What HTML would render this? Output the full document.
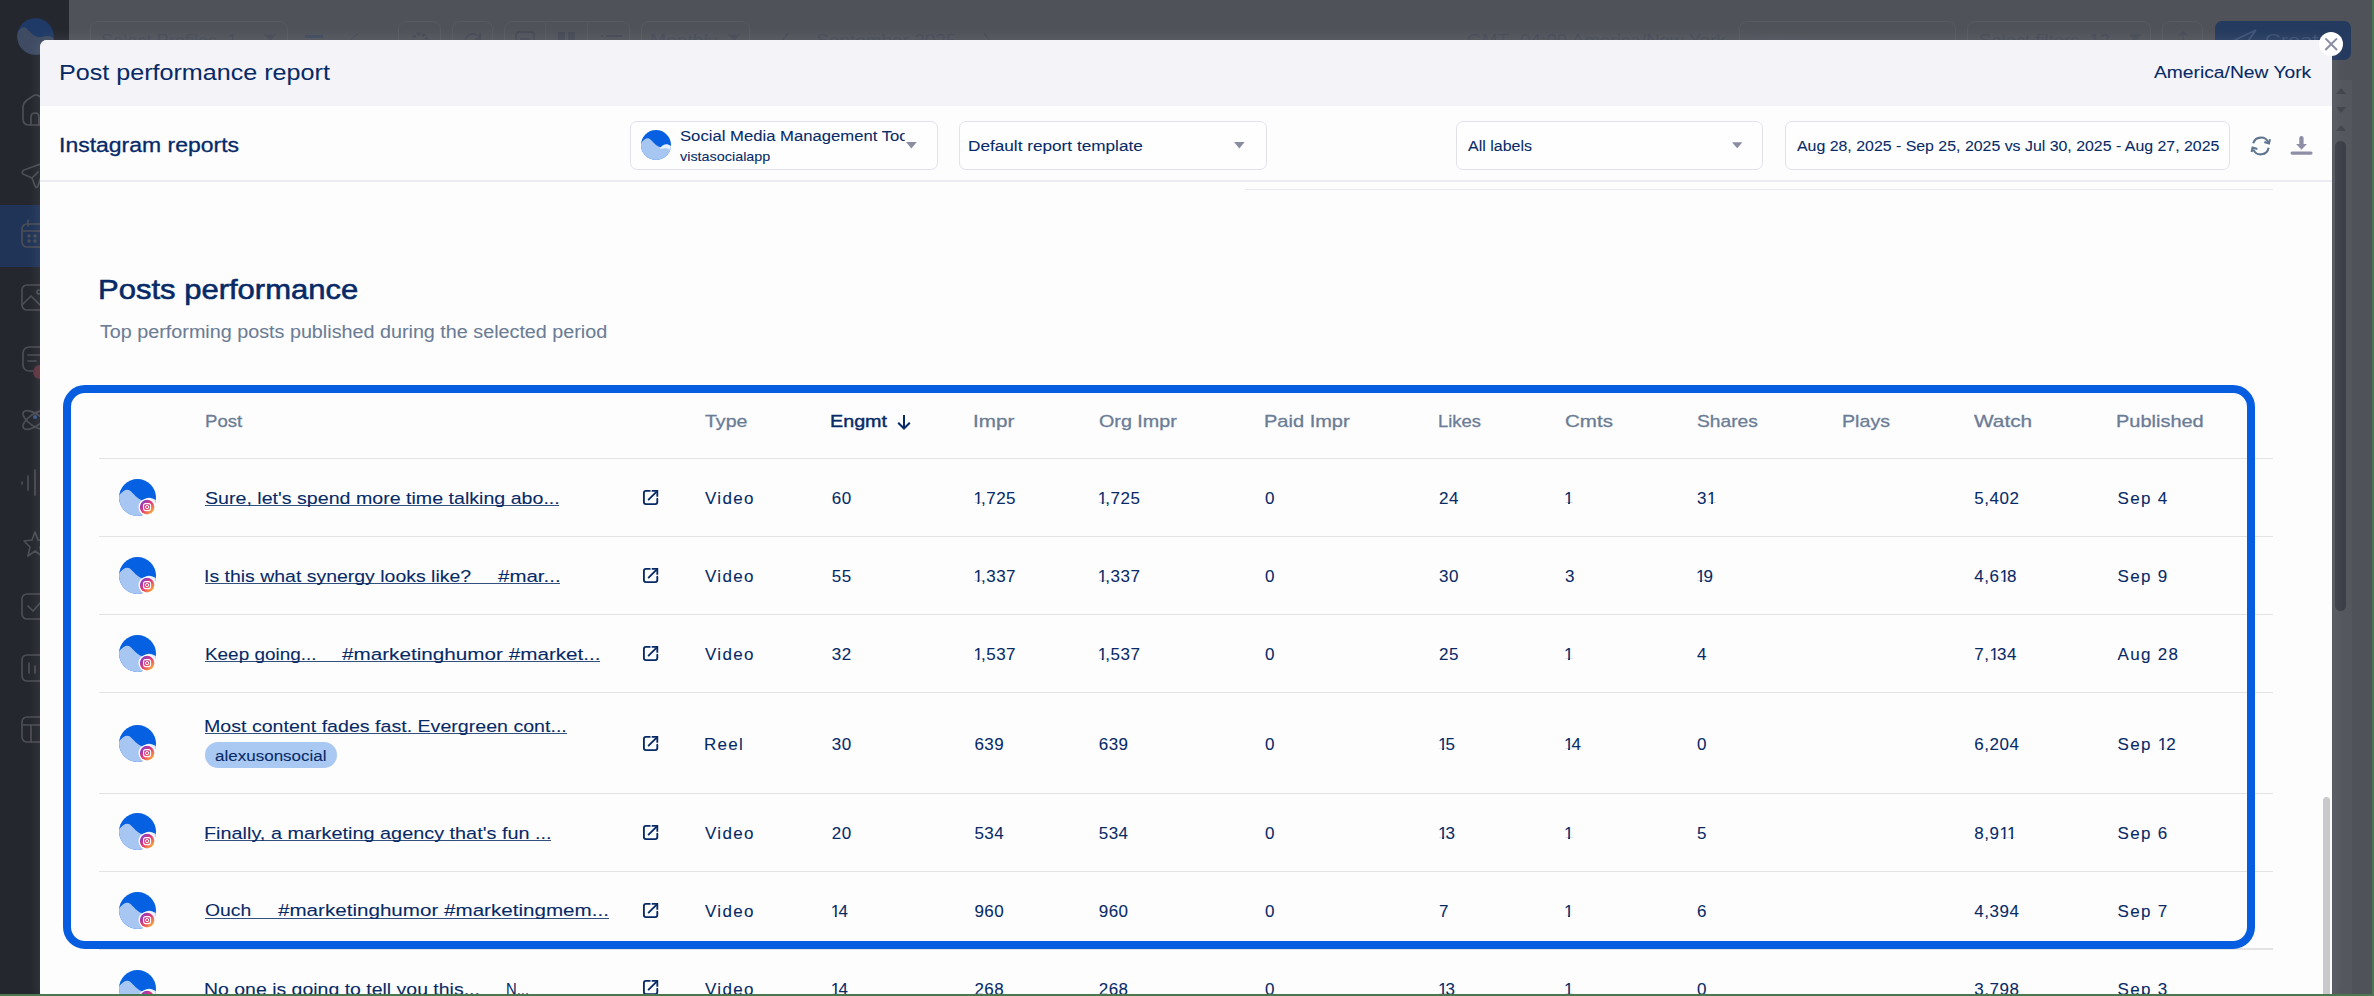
<!DOCTYPE html>
<html><head><meta charset="utf-8"><title>Post performance report</title>
<style>
*{margin:0;padding:0;box-sizing:border-box}
html,body{width:2374px;height:996px;overflow:hidden;background:#50525a;font-family:"Liberation Sans",sans-serif}
.abs{position:absolute}
.t{position:absolute;white-space:nowrap;line-height:1}
.one{display:inline-block;margin-right:-2.4px;clip-path:polygon(0 0,100% 0,100% 0.74em,0.35em 0.74em,0.35em 100%,0.24em 100%,0.24em 0.74em,0 0.74em)}
.ul{position:absolute;height:1.25px;background:#34507f}
.box{border:1.5px solid #e1e2ec;border-radius:7px;background:#fefeff}
.tb{border:1px solid #585a62;border-radius:8px}
</style></head><body>
<div class="abs" style="left:0;top:0;width:2374px;height:996px;background:#50525a"></div>
<div class="abs" style="left:0;top:0;width:69px;height:996px;background:#25272f"></div>
<div class="abs" style="left:0;top:205px;width:69px;height:61.5px;background:#203458"></div>
<svg class="abs" style="left:17px;top:17.5px" width="37" height="37" viewBox="0 0 37 37"><defs><clipPath id="lg"><circle cx="18.5" cy="18.5" r="18.3"/></clipPath></defs><g clip-path="url(#lg)"><rect width="37" height="37" fill="#1f3a66"/><path d="M0 15C4 9 7 8 10 11C15 16 19 20 25 19C30 17 33 18 37 20L37 37L0 37Z" fill="#3e4b62"/></g></svg>
<svg class="abs" style="left:0;top:0" width="69" height="996" viewBox="0 0 69 996" fill="none" stroke="#4c4e56" stroke-width="1.7" stroke-linecap="round" stroke-linejoin="round">
<path d="M23 110Q22 104 27 100L33 96Q36 94 39 96L45 100Q49 103 48 110V119Q48 125 42 125H29Q23 125 23 119Z"/><path d="M31 125V117Q31 113 35 113Q39 113 39 117V125"/>
<path d="M23 174Q21 172 24 170L46 162L38 186Q37 189 35 186L32 178Z"/><path d="M32 178L38 172"/>
<rect x="22" y="224" width="26" height="23" rx="5"/><path d="M28 220V226M42 220V226M22 231H48"/><circle cx="29" cy="236" r="0.9" fill="#4c4e56"/><circle cx="35" cy="236" r="0.9" fill="#4c4e56"/><circle cx="29" cy="241" r="0.9" fill="#4c4e56"/><circle cx="35" cy="241" r="0.9" fill="#4c4e56"/>
<rect x="22" y="285" width="26" height="25" rx="5"/><path d="M22 305L31 296L40 305"/><circle cx="39" cy="292" r="2"/>
<rect x="23" y="347" width="25" height="24" rx="6"/><path d="M28 355H40M28 361H36"/>
<ellipse cx="35" cy="420" rx="14" ry="6" transform="rotate(35 35 420)"/><ellipse cx="35" cy="420" rx="14" ry="6" transform="rotate(-35 35 420)"/>
<path d="M22 482V484M28 476V490M35 470V495"/>
<path d="M35 532L38 540L46 541L40 547L42 556L35 551L28 556L30 547L24 541L32 540Z"/>
<rect x="22" y="594" width="26" height="25" rx="5"/><path d="M28 606L33 611L41 602"/>
<rect x="22" y="655" width="26" height="26" rx="5"/><path d="M29 663V673M35 666V673"/>
<rect x="22" y="717" width="26" height="25" rx="5"/><path d="M22 725H48M31 725V742"/>
</svg>
<div class="abs" style="left:33px;top:365px;width:14px;height:14px;border-radius:50%;background:#5e3440"></div>
<svg class="abs" style="left:31px;top:413px" width="8" height="8"><circle cx="4" cy="4" r="2" fill="#3f5a8a"/></svg>
<div class="abs tb" style="left:89.6px;top:20.7px;width:198px;height:40px"></div>
<svg class="abs" style="left:264px;top:34px" width="12" height="8" viewBox="0 0 10 6"><path d="M0 0H10L5 6Z" fill="#474b56"/></svg>
<div class="abs" style="left:304.5px;top:35px;width:18.5px;height:2.5px;background:#3f4a5e"></div>
<svg class="abs" style="left:348px;top:30px" width="12" height="12"><path d="M2 11L10 3" stroke="#474b56" stroke-width="1.5"/></svg>
<div class="abs tb" style="left:398.4px;top:20.7px;width:43px;height:40px"></div>
<div class="abs tb" style="left:452.2px;top:20.7px;width:41px;height:40px"></div>
<div class="abs tb" style="left:504px;top:20.7px;width:126px;height:40px"></div>
<div class="abs" style="left:545px;top:22px;width:1px;height:20px;background:#565860"></div>
<div class="abs" style="left:587px;top:22px;width:1px;height:20px;background:#565860"></div>
<svg class="abs" style="left:408px;top:28px" width="26" height="14" fill="none" stroke="#444955" stroke-width="2"><circle cx="12" cy="13" r="7" stroke-dasharray="3 2" stroke-width="3"/></svg>
<svg class="abs" style="left:462px;top:30px" width="22" height="12" fill="none" stroke="#444955" stroke-width="1.8"><path d="M3 12A8 8 0 0 1 18 8"/><path d="M18 3V9H13"/></svg>
<svg class="abs" style="left:514px;top:30px" width="22" height="12" fill="none" stroke="#444955" stroke-width="1.8"><rect x="2" y="2" width="18" height="14" rx="3"/><path d="M6 9H16"/></svg>
<div class="abs" style="left:558px;top:32px;width:7px;height:8px;background:#444955"></div><div class="abs" style="left:568px;top:32px;width:7px;height:8px;background:#444955"></div>
<div class="abs" style="left:601px;top:34.5px;width:2px;height:2px;background:#444955"></div><div class="abs" style="left:606px;top:34.5px;width:16px;height:2px;background:#444955"></div>
<div class="abs tb" style="left:641px;top:20.7px;width:109px;height:40px"></div>
<svg class="abs" style="left:728px;top:34px" width="12" height="8" viewBox="0 0 10 6"><path d="M0 0H10L5 6Z" fill="#474b56"/></svg>
<svg class="abs" style="left:780px;top:32px" width="10" height="10"><path d="M8 1L2 9" stroke="#474b56" stroke-width="1.6"/></svg>
<svg class="abs" style="left:982px;top:32px" width="10" height="10"><path d="M2 1L8 9" stroke="#474b56" stroke-width="1.6"/></svg>
<div class="abs tb" style="left:1739px;top:20.7px;width:217px;height:40px"></div>
<div class="abs tb" style="left:1967px;top:20.7px;width:184px;height:40px"></div>
<svg class="abs" style="left:2129px;top:34px" width="12" height="8" viewBox="0 0 10 6"><path d="M0 0H10L5 6Z" fill="#474b56"/></svg>
<div class="abs tb" style="left:2161.8px;top:20.7px;width:41px;height:40px"></div>
<svg class="abs" style="left:2176px;top:30px" width="14" height="12" fill="none" stroke="#474b56" stroke-width="1.6"><path d="M7 12V2M3 6L7 2L11 6"/></svg>
<div class="abs" style="left:2215px;top:21px;width:136px;height:39px;border-radius:7px;background:#243a5e"></div>
<svg class="abs" style="left:2230px;top:27px" width="30" height="15" fill="none" stroke="#3d5378" stroke-width="1.8"><path d="M3 14L26 3L18 14"/></svg>
<div class="abs" style="left:2333px;top:80px;width:19px;height:916px;background:#55575e"></div>
<div class="abs" style="left:2335px;top:141px;width:11px;height:470px;border-radius:6px;background:#3d3f48"></div>
<svg class="abs" style="left:2335px;top:83px" width="12" height="50" viewBox="0 0 12 50"><path d="M1 11L6 5L11 11Z" fill="#44464e"/><path d="M1 24L6 30L11 24Z" fill="#44464e"/><path d="M1 48L6 42L11 48Z" fill="#44464e"/></svg>
<div class="abs" style="left:2372px;top:0;width:2px;height:996px;background:#4a7650"></div>
<div class="t" style="left:101.00px;top:32.11px;font-size:17px;font-weight:400;color:#454a57;-webkit-text-stroke:0px #454a57;transform:scaleX(1.0692);transform-origin:0 0;">Select Profiles &nbsp;1</div><div class="t" style="left:649.86px;top:32.11px;font-size:17px;font-weight:400;color:#454a57;-webkit-text-stroke:0px #454a57;transform:scaleX(1.1351);transform-origin:0 0;">Monthly</div><div class="t" style="left:816.00px;top:32.11px;font-size:17px;font-weight:400;color:#454a57;-webkit-text-stroke:0px #454a57;transform:scaleX(1.1178);transform-origin:0 0;">September 2025</div><div class="t" style="left:1467.00px;top:32.11px;font-size:17px;font-weight:400;color:#454a57;-webkit-text-stroke:0px #454a57;transform:scaleX(1.1101);transform-origin:0 0;">GMT -04:00 America/New York</div><div class="t" style="left:1750.00px;top:32.11px;font-size:17px;font-weight:400;color:#4d515c;-webkit-text-stroke:0px #4d515c;transform:scaleX(0.9474);transform-origin:0 0;">Search</div><div class="t" style="left:1979.00px;top:32.11px;font-size:17px;font-weight:400;color:#454a57;-webkit-text-stroke:0px #454a57;transform:scaleX(1.0839);transform-origin:0 0;">Select filters &nbsp;12</div><div class="t" style="left:2265.00px;top:32.11px;font-size:17px;font-weight:400;color:#3a5076;-webkit-text-stroke:0px #3a5076;transform:scaleX(1.2853);transform-origin:0 0;">Create</div>
<div class="abs" style="left:39.5px;top:39.5px;width:2292.5px;height:960px;border-radius:7px;background:#fdfdfe;overflow:hidden;box-shadow:0 0 14px 1px rgba(255,255,255,0.10)">
  <div class="abs" style="left:0;top:0;width:100%;height:66.3px;background:#f3f3f8"></div>
  <div class="abs" style="left:0;top:140.5px;width:100%;height:1.5px;background:#ebecf2"></div>
  <div class="abs" style="left:1205.5px;top:149px;width:1028px;height:1.5px;background:#e8e9f0"></div>
  <div class="abs" style="left:2283px;top:757px;width:7.5px;height:210px;border-radius:4px;background:#c9c9cb"></div>
</div>
<div class="abs" style="left:99px;top:457.85px;width:2174px;height:1.5px;background:#e3e3e6"></div><div class="abs" style="left:99px;top:535.55px;width:2174px;height:1.5px;background:#e3e3e6"></div><div class="abs" style="left:99px;top:613.75px;width:2174px;height:1.5px;background:#e3e3e6"></div><div class="abs" style="left:99px;top:691.55px;width:2174px;height:1.5px;background:#e3e3e6"></div><div class="abs" style="left:99px;top:792.55px;width:2174px;height:1.5px;background:#e3e3e6"></div><div class="abs" style="left:99px;top:870.65px;width:2174px;height:1.5px;background:#e3e3e6"></div><div class="abs" style="left:99px;top:948.25px;width:2174px;height:1.5px;background:#e3e3e6"></div>
<div class="abs" style="left:63px;top:384.6px;width:2192px;height:564px;border:8px solid #075de0;border-radius:22px"></div>
<div class="abs box" style="left:630.4px;top:121.3px;width:307.3px;height:48.5px"></div><div class="abs box" style="left:958.6px;top:121.3px;width:308.1px;height:48.5px"></div><div class="abs box" style="left:1456.3px;top:121.3px;width:307.2px;height:48.5px"></div><div class="abs box" style="left:1784.7px;top:121.3px;width:445.6px;height:48.5px"></div>
<svg class="abs" style="left:906.0px;top:142.0px" width="10.8" height="6.5" viewBox="0 0 10 6"><path d="M0 0H10L5 6Z" fill="#8a8da1"/></svg><svg class="abs" style="left:1234.3px;top:142.1px" width="10.7" height="6.5" viewBox="0 0 10 6"><path d="M0 0H10L5 6Z" fill="#8a8da1"/></svg><svg class="abs" style="left:1732.2px;top:142.1px" width="10.4" height="6.5" viewBox="0 0 10 6"><path d="M0 0H10L5 6Z" fill="#8a8da1"/></svg>
<svg class="abs" style="left:640.8px;top:130px" width="30" height="30" viewBox="0 0 30 30"><defs><clipPath id="pc"><circle cx="15" cy="15" r="15"/></clipPath></defs><g clip-path="url(#pc)"><rect width="30" height="30" fill="#0660e1"/><path d="M0 13C4 8 7 7 10 10C14 14 17 18 22 17C25 15 27 15 30 17L30 30L0 30Z" fill="#a7c7f2"/><path d="M19 18C22 14 26 13 30 16L30 20C26 18 23 18 19 19Z" fill="#e6effb"/></g></svg>
<svg class="abs" style="left:2245px;top:130px" width="75" height="32" viewBox="2245 130 75 32"><g fill="none" stroke="#5f7590" stroke-width="2.1" stroke-linecap="butt" stroke-linejoin="miter"><path d="M2253.2 143.3A8 8 0 0 1 2268.3 142.6"/><path d="M2264.3 142.0L2268.9 143.4L2270.0 139.2"/><path d="M2268.6 147.8A8 8 0 0 1 2253.4 149.6"/><path d="M2257.4 149.0L2252.6 147.6L2251.6 152.0"/></g>
<path d="M2301.45 138.2V145" stroke="#8e8fa6" stroke-width="4.3" stroke-linecap="round"/><path d="M2296.1 144.1H2306.9L2301.5 149.8Z" fill="#8e8fa6"/><rect x="2290.5" y="151.4" width="22.1" height="3.3" rx="1.65" fill="#8e8fa6"/></svg>
<svg class="abs" style="left:895.5px;top:414px" width="16" height="16" viewBox="0 0 16 16"><path d="M8 1V14.5M2.2 8.7L8 14.5L13.8 8.7" fill="none" stroke="#072a66" stroke-width="2"/></svg>
<div class="abs" style="left:204.9px;top:742.1px;width:132px;height:25.7px;border-radius:13px;background:#a9c8f2"></div>
<svg class="abs" style="left:117.5px;top:478.0px" width="39" height="39" viewBox="-1 -1 39 39">
<defs><clipPath id="cp137_497"><circle cx="18.5" cy="18.5" r="18.5"/></clipPath>
<linearGradient id="ig137_497" x1="0.15" y1="0.15" x2="0.85" y2="0.85"><stop offset="0" stop-color="#8e3bc2"/><stop offset="0.5" stop-color="#e23a72"/><stop offset="1" stop-color="#fba83a"/></linearGradient></defs>
<g clip-path="url(#cp137_497)">
<rect x="0" y="0" width="37" height="37" fill="#0561e1"/>
<path d="M0 16.3 C4.4 11.1 8.1 9.2 11.8 12.2 C16.7 17.0 20.4 22.2 26.6 21.5 C30.3 18.5 33.3 19.2 37 21.5 L37 37 L0 37 Z" fill="#a7c7f2"/>
<path d="M22.9 22.9 C26.6 18.5 31.1 17.0 37 21.5 L37 25.9 C31.4 22.9 27.8 22.9 22.9 24.4 Z" fill="#e6effb"/>
</g>
<circle cx="28.1" cy="28.1" r="8.6" fill="#ffffff"/>
<circle cx="28.1" cy="28.1" r="7.3" fill="url(#ig137_497)"/>
<rect x="24.6" y="24.6" width="7" height="7" rx="2" fill="none" stroke="#fff" stroke-width="1.1"/>
<circle cx="28.1" cy="28.1" r="1.6" fill="none" stroke="#fff" stroke-width="1"/></svg><svg class="abs" style="left:117.5px;top:556.0px" width="39" height="39" viewBox="-1 -1 39 39">
<defs><clipPath id="cp137_575"><circle cx="18.5" cy="18.5" r="18.5"/></clipPath>
<linearGradient id="ig137_575" x1="0.15" y1="0.15" x2="0.85" y2="0.85"><stop offset="0" stop-color="#8e3bc2"/><stop offset="0.5" stop-color="#e23a72"/><stop offset="1" stop-color="#fba83a"/></linearGradient></defs>
<g clip-path="url(#cp137_575)">
<rect x="0" y="0" width="37" height="37" fill="#0561e1"/>
<path d="M0 16.3 C4.4 11.1 8.1 9.2 11.8 12.2 C16.7 17.0 20.4 22.2 26.6 21.5 C30.3 18.5 33.3 19.2 37 21.5 L37 37 L0 37 Z" fill="#a7c7f2"/>
<path d="M22.9 22.9 C26.6 18.5 31.1 17.0 37 21.5 L37 25.9 C31.4 22.9 27.8 22.9 22.9 24.4 Z" fill="#e6effb"/>
</g>
<circle cx="28.1" cy="28.1" r="8.6" fill="#ffffff"/>
<circle cx="28.1" cy="28.1" r="7.3" fill="url(#ig137_575)"/>
<rect x="24.6" y="24.6" width="7" height="7" rx="2" fill="none" stroke="#fff" stroke-width="1.1"/>
<circle cx="28.1" cy="28.1" r="1.6" fill="none" stroke="#fff" stroke-width="1"/></svg><svg class="abs" style="left:117.5px;top:634.0px" width="39" height="39" viewBox="-1 -1 39 39">
<defs><clipPath id="cp137_653"><circle cx="18.5" cy="18.5" r="18.5"/></clipPath>
<linearGradient id="ig137_653" x1="0.15" y1="0.15" x2="0.85" y2="0.85"><stop offset="0" stop-color="#8e3bc2"/><stop offset="0.5" stop-color="#e23a72"/><stop offset="1" stop-color="#fba83a"/></linearGradient></defs>
<g clip-path="url(#cp137_653)">
<rect x="0" y="0" width="37" height="37" fill="#0561e1"/>
<path d="M0 16.3 C4.4 11.1 8.1 9.2 11.8 12.2 C16.7 17.0 20.4 22.2 26.6 21.5 C30.3 18.5 33.3 19.2 37 21.5 L37 37 L0 37 Z" fill="#a7c7f2"/>
<path d="M22.9 22.9 C26.6 18.5 31.1 17.0 37 21.5 L37 25.9 C31.4 22.9 27.8 22.9 22.9 24.4 Z" fill="#e6effb"/>
</g>
<circle cx="28.1" cy="28.1" r="8.6" fill="#ffffff"/>
<circle cx="28.1" cy="28.1" r="7.3" fill="url(#ig137_653)"/>
<rect x="24.6" y="24.6" width="7" height="7" rx="2" fill="none" stroke="#fff" stroke-width="1.1"/>
<circle cx="28.1" cy="28.1" r="1.6" fill="none" stroke="#fff" stroke-width="1"/></svg><svg class="abs" style="left:117.5px;top:723.7px" width="39" height="39" viewBox="-1 -1 39 39">
<defs><clipPath id="cp137_743"><circle cx="18.5" cy="18.5" r="18.5"/></clipPath>
<linearGradient id="ig137_743" x1="0.15" y1="0.15" x2="0.85" y2="0.85"><stop offset="0" stop-color="#8e3bc2"/><stop offset="0.5" stop-color="#e23a72"/><stop offset="1" stop-color="#fba83a"/></linearGradient></defs>
<g clip-path="url(#cp137_743)">
<rect x="0" y="0" width="37" height="37" fill="#0561e1"/>
<path d="M0 16.3 C4.4 11.1 8.1 9.2 11.8 12.2 C16.7 17.0 20.4 22.2 26.6 21.5 C30.3 18.5 33.3 19.2 37 21.5 L37 37 L0 37 Z" fill="#a7c7f2"/>
<path d="M22.9 22.9 C26.6 18.5 31.1 17.0 37 21.5 L37 25.9 C31.4 22.9 27.8 22.9 22.9 24.4 Z" fill="#e6effb"/>
</g>
<circle cx="28.1" cy="28.1" r="8.6" fill="#ffffff"/>
<circle cx="28.1" cy="28.1" r="7.3" fill="url(#ig137_743)"/>
<rect x="24.6" y="24.6" width="7" height="7" rx="2" fill="none" stroke="#fff" stroke-width="1.1"/>
<circle cx="28.1" cy="28.1" r="1.6" fill="none" stroke="#fff" stroke-width="1"/></svg><svg class="abs" style="left:117.5px;top:812.2px" width="39" height="39" viewBox="-1 -1 39 39">
<defs><clipPath id="cp137_831"><circle cx="18.5" cy="18.5" r="18.5"/></clipPath>
<linearGradient id="ig137_831" x1="0.15" y1="0.15" x2="0.85" y2="0.85"><stop offset="0" stop-color="#8e3bc2"/><stop offset="0.5" stop-color="#e23a72"/><stop offset="1" stop-color="#fba83a"/></linearGradient></defs>
<g clip-path="url(#cp137_831)">
<rect x="0" y="0" width="37" height="37" fill="#0561e1"/>
<path d="M0 16.3 C4.4 11.1 8.1 9.2 11.8 12.2 C16.7 17.0 20.4 22.2 26.6 21.5 C30.3 18.5 33.3 19.2 37 21.5 L37 37 L0 37 Z" fill="#a7c7f2"/>
<path d="M22.9 22.9 C26.6 18.5 31.1 17.0 37 21.5 L37 25.9 C31.4 22.9 27.8 22.9 22.9 24.4 Z" fill="#e6effb"/>
</g>
<circle cx="28.1" cy="28.1" r="8.6" fill="#ffffff"/>
<circle cx="28.1" cy="28.1" r="7.3" fill="url(#ig137_831)"/>
<rect x="24.6" y="24.6" width="7" height="7" rx="2" fill="none" stroke="#fff" stroke-width="1.1"/>
<circle cx="28.1" cy="28.1" r="1.6" fill="none" stroke="#fff" stroke-width="1"/></svg><svg class="abs" style="left:117.5px;top:890.5px" width="39" height="39" viewBox="-1 -1 39 39">
<defs><clipPath id="cp137_910"><circle cx="18.5" cy="18.5" r="18.5"/></clipPath>
<linearGradient id="ig137_910" x1="0.15" y1="0.15" x2="0.85" y2="0.85"><stop offset="0" stop-color="#8e3bc2"/><stop offset="0.5" stop-color="#e23a72"/><stop offset="1" stop-color="#fba83a"/></linearGradient></defs>
<g clip-path="url(#cp137_910)">
<rect x="0" y="0" width="37" height="37" fill="#0561e1"/>
<path d="M0 16.3 C4.4 11.1 8.1 9.2 11.8 12.2 C16.7 17.0 20.4 22.2 26.6 21.5 C30.3 18.5 33.3 19.2 37 21.5 L37 37 L0 37 Z" fill="#a7c7f2"/>
<path d="M22.9 22.9 C26.6 18.5 31.1 17.0 37 21.5 L37 25.9 C31.4 22.9 27.8 22.9 22.9 24.4 Z" fill="#e6effb"/>
</g>
<circle cx="28.1" cy="28.1" r="8.6" fill="#ffffff"/>
<circle cx="28.1" cy="28.1" r="7.3" fill="url(#ig137_910)"/>
<rect x="24.6" y="24.6" width="7" height="7" rx="2" fill="none" stroke="#fff" stroke-width="1.1"/>
<circle cx="28.1" cy="28.1" r="1.6" fill="none" stroke="#fff" stroke-width="1"/></svg><svg class="abs" style="left:117.5px;top:968.5px" width="39" height="39" viewBox="-1 -1 39 39">
<defs><clipPath id="cp137_988"><circle cx="18.5" cy="18.5" r="18.5"/></clipPath>
<linearGradient id="ig137_988" x1="0.15" y1="0.15" x2="0.85" y2="0.85"><stop offset="0" stop-color="#8e3bc2"/><stop offset="0.5" stop-color="#e23a72"/><stop offset="1" stop-color="#fba83a"/></linearGradient></defs>
<g clip-path="url(#cp137_988)">
<rect x="0" y="0" width="37" height="37" fill="#0561e1"/>
<path d="M0 16.3 C4.4 11.1 8.1 9.2 11.8 12.2 C16.7 17.0 20.4 22.2 26.6 21.5 C30.3 18.5 33.3 19.2 37 21.5 L37 37 L0 37 Z" fill="#a7c7f2"/>
<path d="M22.9 22.9 C26.6 18.5 31.1 17.0 37 21.5 L37 25.9 C31.4 22.9 27.8 22.9 22.9 24.4 Z" fill="#e6effb"/>
</g>
<circle cx="28.1" cy="28.1" r="8.6" fill="#ffffff"/>
<circle cx="28.1" cy="28.1" r="7.3" fill="url(#ig137_988)"/>
<rect x="24.6" y="24.6" width="7" height="7" rx="2" fill="none" stroke="#fff" stroke-width="1.1"/>
<circle cx="28.1" cy="28.1" r="1.6" fill="none" stroke="#fff" stroke-width="1"/></svg>
<svg class="abs" style="left:642px;top:488.9px" width="17" height="17" viewBox="-1 -1 17 17"><g fill="none" stroke="#072a66" stroke-width="1.85" stroke-linecap="round"><path d="M6.8 0.9H2.9Q0.9 0.9 0.9 2.9V12.1Q0.9 14.1 2.9 14.1H12.3Q14.3 14.1 14.3 12.1V8.7"/><path d="M8.7 0.9H14.3V6.8" stroke-linecap="butt"/><path d="M5.6 9.6L13.9 1.3"/></g></svg><svg class="abs" style="left:642px;top:566.9px" width="17" height="17" viewBox="-1 -1 17 17"><g fill="none" stroke="#072a66" stroke-width="1.85" stroke-linecap="round"><path d="M6.8 0.9H2.9Q0.9 0.9 0.9 2.9V12.1Q0.9 14.1 2.9 14.1H12.3Q14.3 14.1 14.3 12.1V8.7"/><path d="M8.7 0.9H14.3V6.8" stroke-linecap="butt"/><path d="M5.6 9.6L13.9 1.3"/></g></svg><svg class="abs" style="left:642px;top:644.8px" width="17" height="17" viewBox="-1 -1 17 17"><g fill="none" stroke="#072a66" stroke-width="1.85" stroke-linecap="round"><path d="M6.8 0.9H2.9Q0.9 0.9 0.9 2.9V12.1Q0.9 14.1 2.9 14.1H12.3Q14.3 14.1 14.3 12.1V8.7"/><path d="M8.7 0.9H14.3V6.8" stroke-linecap="butt"/><path d="M5.6 9.6L13.9 1.3"/></g></svg><svg class="abs" style="left:642px;top:734.7px" width="17" height="17" viewBox="-1 -1 17 17"><g fill="none" stroke="#072a66" stroke-width="1.85" stroke-linecap="round"><path d="M6.8 0.9H2.9Q0.9 0.9 0.9 2.9V12.1Q0.9 14.1 2.9 14.1H12.3Q14.3 14.1 14.3 12.1V8.7"/><path d="M8.7 0.9H14.3V6.8" stroke-linecap="butt"/><path d="M5.6 9.6L13.9 1.3"/></g></svg><svg class="abs" style="left:642px;top:823.7px" width="17" height="17" viewBox="-1 -1 17 17"><g fill="none" stroke="#072a66" stroke-width="1.85" stroke-linecap="round"><path d="M6.8 0.9H2.9Q0.9 0.9 0.9 2.9V12.1Q0.9 14.1 2.9 14.1H12.3Q14.3 14.1 14.3 12.1V8.7"/><path d="M8.7 0.9H14.3V6.8" stroke-linecap="butt"/><path d="M5.6 9.6L13.9 1.3"/></g></svg><svg class="abs" style="left:642px;top:901.5px" width="17" height="17" viewBox="-1 -1 17 17"><g fill="none" stroke="#072a66" stroke-width="1.85" stroke-linecap="round"><path d="M6.8 0.9H2.9Q0.9 0.9 0.9 2.9V12.1Q0.9 14.1 2.9 14.1H12.3Q14.3 14.1 14.3 12.1V8.7"/><path d="M8.7 0.9H14.3V6.8" stroke-linecap="butt"/><path d="M5.6 9.6L13.9 1.3"/></g></svg><svg class="abs" style="left:642px;top:979.1px" width="17" height="17" viewBox="-1 -1 17 17"><g fill="none" stroke="#072a66" stroke-width="1.85" stroke-linecap="round"><path d="M6.8 0.9H2.9Q0.9 0.9 0.9 2.9V12.1Q0.9 14.1 2.9 14.1H12.3Q14.3 14.1 14.3 12.1V8.7"/><path d="M8.7 0.9H14.3V6.8" stroke-linecap="butt"/><path d="M5.6 9.6L13.9 1.3"/></g></svg>
<div class="ul" style="left:204.5px;width:354.9px;top:505.1px"></div><div class="ul" style="left:204.5px;width:355.8px;top:583.1px"></div><div class="ul" style="left:205.2px;width:395.2px;top:660.7px"></div><div class="ul" style="left:205.0px;width:361.8px;top:732.7px"></div><div class="ul" style="left:204.5px;width:346.5px;top:839.9px"></div><div class="ul" style="left:204.8px;width:404.0px;top:917.5px"></div><div class="ul" style="left:204.8px;width:323.7px;top:995.7px"></div>
<div class="t" style="left:59.38px;top:61.75px;font-size:22.5px;font-weight:400;color:#072a66;-webkit-text-stroke:0.05px #072a66;transform:scaleX(1.1165);transform-origin:0 0;">Post performance report</div><div class="t" style="left:2154.00px;top:63.81px;font-size:17px;font-weight:400;color:#072a66;-webkit-text-stroke:0.08px #072a66;transform:scaleX(1.1317);transform-origin:0 0;">America/New York</div><div class="t" style="left:59.15px;top:134.97px;font-size:20px;font-weight:400;color:#072a66;-webkit-text-stroke:0.3px #072a66;transform:scaleX(1.1488);transform-origin:0 0;">Instagram reports</div><div class="t" style="left:680.30px;top:128.86px;font-size:14.7px;font-weight:400;color:#072a66;-webkit-text-stroke:0.08px #072a66;transform:scaleX(1.1350);transform-origin:0 0;width:198.3px;overflow:hidden;">Social Media Management Too</div><div class="t" style="left:680.30px;top:150.33px;font-size:13.2px;font-weight:400;color:#072a66;-webkit-text-stroke:0.08px #072a66;transform:scaleX(1.0909);transform-origin:0 0;">vistasocialapp</div><div class="t" style="left:968.39px;top:137.98px;font-size:15.5px;font-weight:400;color:#072a66;-webkit-text-stroke:0.08px #072a66;transform:scaleX(1.1087);transform-origin:0 0;">Default report template</div><div class="t" style="left:1468.10px;top:137.78px;font-size:15.5px;font-weight:400;color:#072a66;-webkit-text-stroke:0.08px #072a66;transform:scaleX(1.0324);transform-origin:0 0;">All labels</div><div class="t" style="left:1796.60px;top:137.68px;font-size:15.5px;font-weight:400;color:#072a66;-webkit-text-stroke:0.08px #072a66;transform:scaleX(1.0253);transform-origin:0 0;">Aug 28, 2025 - Sep 25, 2025 vs Jul 30, 2025 - Aug 27, 2025</div><div class="t" style="left:97.67px;top:275.67px;font-size:27.8px;font-weight:400;color:#072a66;-webkit-text-stroke:0.6px #072a66;transform:scaleX(1.1155);transform-origin:0 0;">Posts performance</div><div class="t" style="left:99.90px;top:323.16px;font-size:18px;font-weight:400;color:#6b7c95;-webkit-text-stroke:0.08px #6b7c95;transform:scaleX(1.0972);transform-origin:0 0;">Top performing posts published during the selected period</div><div class="t" style="left:204.51px;top:413.01px;font-size:17px;font-weight:400;color:#6b7c95;-webkit-text-stroke:0.3px #6b7c95;transform:scaleX(1.0933);transform-origin:0 0;">Post</div><div class="t" style="left:705.10px;top:413.01px;font-size:17px;font-weight:400;color:#6b7c95;-webkit-text-stroke:0.3px #6b7c95;transform:scaleX(1.1511);transform-origin:0 0;">Type</div><div class="t" style="left:830.34px;top:413.01px;font-size:17px;font-weight:400;color:#072a66;-webkit-text-stroke:0.42px #072a66;transform:scaleX(1.1609);transform-origin:0 0;">Engmt</div><div class="t" style="left:972.79px;top:413.01px;font-size:17px;font-weight:400;color:#6b7c95;-webkit-text-stroke:0.3px #6b7c95;transform:scaleX(1.2148);transform-origin:0 0;">Impr</div><div class="t" style="left:1098.70px;top:413.01px;font-size:17px;font-weight:400;color:#6b7c95;-webkit-text-stroke:0.3px #6b7c95;transform:scaleX(1.1602);transform-origin:0 0;">Org Impr</div><div class="t" style="left:1263.72px;top:413.01px;font-size:17px;font-weight:400;color:#6b7c95;-webkit-text-stroke:0.3px #6b7c95;transform:scaleX(1.1777);transform-origin:0 0;">Paid Impr</div><div class="t" style="left:1437.92px;top:413.01px;font-size:17px;font-weight:400;color:#6b7c95;-webkit-text-stroke:0.3px #6b7c95;transform:scaleX(1.0842);transform-origin:0 0;">Likes</div><div class="t" style="left:1565.00px;top:413.01px;font-size:17px;font-weight:400;color:#6b7c95;-webkit-text-stroke:0.3px #6b7c95;transform:scaleX(1.2078);transform-origin:0 0;">Cmts</div><div class="t" style="left:1696.80px;top:413.01px;font-size:17px;font-weight:400;color:#6b7c95;-webkit-text-stroke:0.3px #6b7c95;transform:scaleX(1.1300);transform-origin:0 0;">Shares</div><div class="t" style="left:1842.34px;top:413.01px;font-size:17px;font-weight:400;color:#6b7c95;-webkit-text-stroke:0.3px #6b7c95;transform:scaleX(1.1555);transform-origin:0 0;">Plays</div><div class="t" style="left:1974.30px;top:413.01px;font-size:17px;font-weight:400;color:#6b7c95;-webkit-text-stroke:0.3px #6b7c95;transform:scaleX(1.2231);transform-origin:0 0;">Watch</div><div class="t" style="left:2116.43px;top:413.01px;font-size:17px;font-weight:400;color:#6b7c95;-webkit-text-stroke:0.3px #6b7c95;transform:scaleX(1.1747);transform-origin:0 0;">Published</div><div class="t" style="left:205.00px;top:490.01px;font-size:17px;font-weight:400;color:#072a66;-webkit-text-stroke:0.08px #072a66;transform:scaleX(1.1536);transform-origin:0 0;">Sure, let's spend more time talking abo...</div><div class="t" style="left:705.00px;top:490.21px;font-size:17px;font-weight:400;color:#072a66;-webkit-text-stroke:0.08px #072a66;letter-spacing:1.300px">Video</div><div class="t" style="left:831.80px;top:490.21px;font-size:17px;font-weight:400;color:#072a66;-webkit-text-stroke:0.08px #072a66;letter-spacing:0.500px">60</div><div class="t" style="left:973.40px;top:490.21px;font-size:17px;font-weight:400;color:#072a66;-webkit-text-stroke:0.08px #072a66;letter-spacing:0.500px"><span class="one">1</span>,725</div><div class="t" style="left:1097.70px;top:490.21px;font-size:17px;font-weight:400;color:#072a66;-webkit-text-stroke:0.08px #072a66;letter-spacing:0.500px"><span class="one">1</span>,725</div><div class="t" style="left:1264.90px;top:490.21px;font-size:17px;font-weight:400;color:#072a66;-webkit-text-stroke:0.08px #072a66;letter-spacing:0.500px">0</div><div class="t" style="left:1439.00px;top:490.21px;font-size:17px;font-weight:400;color:#072a66;-webkit-text-stroke:0.08px #072a66;letter-spacing:0.500px">24</div><div class="t" style="left:1564.00px;top:490.21px;font-size:17px;font-weight:400;color:#072a66;-webkit-text-stroke:0.08px #072a66;letter-spacing:0.500px"><span class="one">1</span></div><div class="t" style="left:1697.00px;top:490.21px;font-size:17px;font-weight:400;color:#072a66;-webkit-text-stroke:0.08px #072a66;letter-spacing:0.500px">3<span class="one">1</span></div><div class="t" style="left:1974.30px;top:490.21px;font-size:17px;font-weight:400;color:#072a66;-webkit-text-stroke:0.08px #072a66;letter-spacing:0.500px">5,402</div><div class="t" style="left:2117.60px;top:490.21px;font-size:17px;font-weight:400;color:#072a66;-webkit-text-stroke:0.08px #072a66;letter-spacing:1.300px">Sep 4</div><div class="t" style="left:203.86px;top:568.01px;font-size:17px;font-weight:400;color:#072a66;-webkit-text-stroke:0.08px #072a66;transform:scaleX(1.1444);transform-origin:0 0;">Is this what synergy looks like?</div><div class="t" style="left:498.10px;top:568.01px;font-size:17px;font-weight:400;color:#072a66;-webkit-text-stroke:0.08px #072a66;transform:scaleX(1.2041);transform-origin:0 0;">#mar...</div><div class="t" style="left:705.00px;top:568.21px;font-size:17px;font-weight:400;color:#072a66;-webkit-text-stroke:0.08px #072a66;letter-spacing:1.300px">Video</div><div class="t" style="left:831.80px;top:568.21px;font-size:17px;font-weight:400;color:#072a66;-webkit-text-stroke:0.08px #072a66;letter-spacing:0.500px">55</div><div class="t" style="left:973.40px;top:568.21px;font-size:17px;font-weight:400;color:#072a66;-webkit-text-stroke:0.08px #072a66;letter-spacing:0.500px"><span class="one">1</span>,337</div><div class="t" style="left:1097.70px;top:568.21px;font-size:17px;font-weight:400;color:#072a66;-webkit-text-stroke:0.08px #072a66;letter-spacing:0.500px"><span class="one">1</span>,337</div><div class="t" style="left:1264.90px;top:568.21px;font-size:17px;font-weight:400;color:#072a66;-webkit-text-stroke:0.08px #072a66;letter-spacing:0.500px">0</div><div class="t" style="left:1439.00px;top:568.21px;font-size:17px;font-weight:400;color:#072a66;-webkit-text-stroke:0.08px #072a66;letter-spacing:0.500px">30</div><div class="t" style="left:1565.00px;top:568.21px;font-size:17px;font-weight:400;color:#072a66;-webkit-text-stroke:0.08px #072a66;letter-spacing:0.500px">3</div><div class="t" style="left:1696.00px;top:568.21px;font-size:17px;font-weight:400;color:#072a66;-webkit-text-stroke:0.08px #072a66;letter-spacing:0.500px"><span class="one">1</span>9</div><div class="t" style="left:1974.30px;top:568.21px;font-size:17px;font-weight:400;color:#072a66;-webkit-text-stroke:0.08px #072a66;letter-spacing:0.500px">4,6<span class="one">1</span>8</div><div class="t" style="left:2117.60px;top:568.21px;font-size:17px;font-weight:400;color:#072a66;-webkit-text-stroke:0.08px #072a66;letter-spacing:1.300px">Sep 9</div><div class="t" style="left:204.59px;top:645.61px;font-size:17px;font-weight:400;color:#072a66;-webkit-text-stroke:0.08px #072a66;transform:scaleX(1.1120);transform-origin:0 0;">Keep going...</div><div class="t" style="left:342.20px;top:645.61px;font-size:17px;font-weight:400;color:#072a66;-webkit-text-stroke:0.08px #072a66;transform:scaleX(1.2164);transform-origin:0 0;">#marketinghumor #market...</div><div class="t" style="left:705.00px;top:645.81px;font-size:17px;font-weight:400;color:#072a66;-webkit-text-stroke:0.08px #072a66;letter-spacing:1.300px">Video</div><div class="t" style="left:831.80px;top:645.81px;font-size:17px;font-weight:400;color:#072a66;-webkit-text-stroke:0.08px #072a66;letter-spacing:0.500px">32</div><div class="t" style="left:973.40px;top:645.81px;font-size:17px;font-weight:400;color:#072a66;-webkit-text-stroke:0.08px #072a66;letter-spacing:0.500px"><span class="one">1</span>,537</div><div class="t" style="left:1097.70px;top:645.81px;font-size:17px;font-weight:400;color:#072a66;-webkit-text-stroke:0.08px #072a66;letter-spacing:0.500px"><span class="one">1</span>,537</div><div class="t" style="left:1264.90px;top:645.81px;font-size:17px;font-weight:400;color:#072a66;-webkit-text-stroke:0.08px #072a66;letter-spacing:0.500px">0</div><div class="t" style="left:1439.00px;top:645.81px;font-size:17px;font-weight:400;color:#072a66;-webkit-text-stroke:0.08px #072a66;letter-spacing:0.500px">25</div><div class="t" style="left:1564.00px;top:645.81px;font-size:17px;font-weight:400;color:#072a66;-webkit-text-stroke:0.08px #072a66;letter-spacing:0.500px"><span class="one">1</span></div><div class="t" style="left:1697.00px;top:645.81px;font-size:17px;font-weight:400;color:#072a66;-webkit-text-stroke:0.08px #072a66;letter-spacing:0.500px">4</div><div class="t" style="left:1974.30px;top:645.81px;font-size:17px;font-weight:400;color:#072a66;-webkit-text-stroke:0.08px #072a66;letter-spacing:0.500px">7,<span class="one">1</span>34</div><div class="t" style="left:2117.60px;top:645.81px;font-size:17px;font-weight:400;color:#072a66;-webkit-text-stroke:0.08px #072a66;letter-spacing:1.300px">Aug 28</div><div class="t" style="left:204.35px;top:717.61px;font-size:17px;font-weight:400;color:#072a66;-webkit-text-stroke:0.08px #072a66;transform:scaleX(1.1529);transform-origin:0 0;">Most content fades fast. Evergreen cont...</div><div class="t" style="left:704.00px;top:735.81px;font-size:17px;font-weight:400;color:#072a66;-webkit-text-stroke:0.08px #072a66;letter-spacing:1.300px">Reel</div><div class="t" style="left:831.80px;top:735.81px;font-size:17px;font-weight:400;color:#072a66;-webkit-text-stroke:0.08px #072a66;letter-spacing:0.500px">30</div><div class="t" style="left:974.40px;top:735.81px;font-size:17px;font-weight:400;color:#072a66;-webkit-text-stroke:0.08px #072a66;letter-spacing:0.500px">639</div><div class="t" style="left:1098.70px;top:735.81px;font-size:17px;font-weight:400;color:#072a66;-webkit-text-stroke:0.08px #072a66;letter-spacing:0.500px">639</div><div class="t" style="left:1264.90px;top:735.81px;font-size:17px;font-weight:400;color:#072a66;-webkit-text-stroke:0.08px #072a66;letter-spacing:0.500px">0</div><div class="t" style="left:1438.00px;top:735.81px;font-size:17px;font-weight:400;color:#072a66;-webkit-text-stroke:0.08px #072a66;letter-spacing:0.500px"><span class="one">1</span>5</div><div class="t" style="left:1564.00px;top:735.81px;font-size:17px;font-weight:400;color:#072a66;-webkit-text-stroke:0.08px #072a66;letter-spacing:0.500px"><span class="one">1</span>4</div><div class="t" style="left:1697.00px;top:735.81px;font-size:17px;font-weight:400;color:#072a66;-webkit-text-stroke:0.08px #072a66;letter-spacing:0.500px">0</div><div class="t" style="left:1974.30px;top:735.81px;font-size:17px;font-weight:400;color:#072a66;-webkit-text-stroke:0.08px #072a66;letter-spacing:0.500px">6,204</div><div class="t" style="left:2117.60px;top:735.81px;font-size:17px;font-weight:400;color:#072a66;-webkit-text-stroke:0.08px #072a66;letter-spacing:1.300px">Sep <span class="one">1</span>2</div><div class="t" style="left:203.83px;top:824.81px;font-size:17px;font-weight:400;color:#072a66;-webkit-text-stroke:0.08px #072a66;transform:scaleX(1.1672);transform-origin:0 0;">Finally, a marketing agency that's fun ...</div><div class="t" style="left:705.00px;top:825.01px;font-size:17px;font-weight:400;color:#072a66;-webkit-text-stroke:0.08px #072a66;letter-spacing:1.300px">Video</div><div class="t" style="left:831.80px;top:825.01px;font-size:17px;font-weight:400;color:#072a66;-webkit-text-stroke:0.08px #072a66;letter-spacing:0.500px">20</div><div class="t" style="left:974.40px;top:825.01px;font-size:17px;font-weight:400;color:#072a66;-webkit-text-stroke:0.08px #072a66;letter-spacing:0.500px">534</div><div class="t" style="left:1098.70px;top:825.01px;font-size:17px;font-weight:400;color:#072a66;-webkit-text-stroke:0.08px #072a66;letter-spacing:0.500px">534</div><div class="t" style="left:1264.90px;top:825.01px;font-size:17px;font-weight:400;color:#072a66;-webkit-text-stroke:0.08px #072a66;letter-spacing:0.500px">0</div><div class="t" style="left:1438.00px;top:825.01px;font-size:17px;font-weight:400;color:#072a66;-webkit-text-stroke:0.08px #072a66;letter-spacing:0.500px"><span class="one">1</span>3</div><div class="t" style="left:1564.00px;top:825.01px;font-size:17px;font-weight:400;color:#072a66;-webkit-text-stroke:0.08px #072a66;letter-spacing:0.500px"><span class="one">1</span></div><div class="t" style="left:1697.00px;top:825.01px;font-size:17px;font-weight:400;color:#072a66;-webkit-text-stroke:0.08px #072a66;letter-spacing:0.500px">5</div><div class="t" style="left:1974.30px;top:825.01px;font-size:17px;font-weight:400;color:#072a66;-webkit-text-stroke:0.08px #072a66;letter-spacing:0.500px">8,9<span class="one">1</span><span class="one">1</span></div><div class="t" style="left:2117.60px;top:825.01px;font-size:17px;font-weight:400;color:#072a66;-webkit-text-stroke:0.08px #072a66;letter-spacing:1.300px">Sep 6</div><div class="t" style="left:205.30px;top:902.41px;font-size:17px;font-weight:400;color:#072a66;-webkit-text-stroke:0.08px #072a66;transform:scaleX(1.1399);transform-origin:0 0;">Ouch</div><div class="t" style="left:278.30px;top:902.41px;font-size:17px;font-weight:400;color:#072a66;-webkit-text-stroke:0.08px #072a66;transform:scaleX(1.2118);transform-origin:0 0;">#marketinghumor #marketingmem...</div><div class="t" style="left:705.00px;top:902.61px;font-size:17px;font-weight:400;color:#072a66;-webkit-text-stroke:0.08px #072a66;letter-spacing:1.300px">Video</div><div class="t" style="left:830.80px;top:902.61px;font-size:17px;font-weight:400;color:#072a66;-webkit-text-stroke:0.08px #072a66;letter-spacing:0.500px"><span class="one">1</span>4</div><div class="t" style="left:974.40px;top:902.61px;font-size:17px;font-weight:400;color:#072a66;-webkit-text-stroke:0.08px #072a66;letter-spacing:0.500px">960</div><div class="t" style="left:1098.70px;top:902.61px;font-size:17px;font-weight:400;color:#072a66;-webkit-text-stroke:0.08px #072a66;letter-spacing:0.500px">960</div><div class="t" style="left:1264.90px;top:902.61px;font-size:17px;font-weight:400;color:#072a66;-webkit-text-stroke:0.08px #072a66;letter-spacing:0.500px">0</div><div class="t" style="left:1439.00px;top:902.61px;font-size:17px;font-weight:400;color:#072a66;-webkit-text-stroke:0.08px #072a66;letter-spacing:0.500px">7</div><div class="t" style="left:1564.00px;top:902.61px;font-size:17px;font-weight:400;color:#072a66;-webkit-text-stroke:0.08px #072a66;letter-spacing:0.500px"><span class="one">1</span></div><div class="t" style="left:1697.00px;top:902.61px;font-size:17px;font-weight:400;color:#072a66;-webkit-text-stroke:0.08px #072a66;letter-spacing:0.500px">6</div><div class="t" style="left:1974.30px;top:902.61px;font-size:17px;font-weight:400;color:#072a66;-webkit-text-stroke:0.08px #072a66;letter-spacing:0.500px">4,394</div><div class="t" style="left:2117.60px;top:902.61px;font-size:17px;font-weight:400;color:#072a66;-webkit-text-stroke:0.08px #072a66;letter-spacing:1.300px">Sep 7</div><div class="t" style="left:204.16px;top:980.61px;font-size:17px;font-weight:400;color:#072a66;-webkit-text-stroke:0.08px #072a66;transform:scaleX(1.1448);transform-origin:0 0;">No one is going to tell you this...</div><div class="t" style="left:505.63px;top:980.61px;font-size:17px;font-weight:400;color:#072a66;-webkit-text-stroke:0.08px #072a66;transform:scaleX(0.8696);transform-origin:0 0;">N...</div><div class="t" style="left:705.00px;top:980.81px;font-size:17px;font-weight:400;color:#072a66;-webkit-text-stroke:0.08px #072a66;letter-spacing:1.300px">Video</div><div class="t" style="left:830.80px;top:980.81px;font-size:17px;font-weight:400;color:#072a66;-webkit-text-stroke:0.08px #072a66;letter-spacing:0.500px"><span class="one">1</span>4</div><div class="t" style="left:974.40px;top:980.81px;font-size:17px;font-weight:400;color:#072a66;-webkit-text-stroke:0.08px #072a66;letter-spacing:0.500px">268</div><div class="t" style="left:1098.70px;top:980.81px;font-size:17px;font-weight:400;color:#072a66;-webkit-text-stroke:0.08px #072a66;letter-spacing:0.500px">268</div><div class="t" style="left:1264.90px;top:980.81px;font-size:17px;font-weight:400;color:#072a66;-webkit-text-stroke:0.08px #072a66;letter-spacing:0.500px">0</div><div class="t" style="left:1438.00px;top:980.81px;font-size:17px;font-weight:400;color:#072a66;-webkit-text-stroke:0.08px #072a66;letter-spacing:0.500px"><span class="one">1</span>3</div><div class="t" style="left:1564.00px;top:980.81px;font-size:17px;font-weight:400;color:#072a66;-webkit-text-stroke:0.08px #072a66;letter-spacing:0.500px"><span class="one">1</span></div><div class="t" style="left:1697.00px;top:980.81px;font-size:17px;font-weight:400;color:#072a66;-webkit-text-stroke:0.08px #072a66;letter-spacing:0.500px">0</div><div class="t" style="left:1974.30px;top:980.81px;font-size:17px;font-weight:400;color:#072a66;-webkit-text-stroke:0.08px #072a66;letter-spacing:0.500px">3,798</div><div class="t" style="left:2117.60px;top:980.81px;font-size:17px;font-weight:400;color:#072a66;-webkit-text-stroke:0.08px #072a66;letter-spacing:1.300px">Sep 3</div><div class="t" style="left:215.20px;top:748.03px;font-size:15.2px;font-weight:400;color:#072a66;-webkit-text-stroke:0.08px #072a66;transform:scaleX(1.1204);transform-origin:0 0;">alexusonsocial</div>
<div class="abs" style="left:2319px;top:32px;width:24.4px;height:24.4px;border-radius:50%;background:#ffffff"></div>
<svg class="abs" style="left:2319px;top:32px" width="24.4" height="24.4" viewBox="0 0 24 24"><path d="M6.3 6.3L17.7 17.7M17.7 6.3L6.3 17.7" stroke="#8a8ea3" stroke-width="2"/></svg>
<div class="abs" style="left:0;top:994px;width:2374px;height:2px;background:#4a7650"></div>
</body></html>
